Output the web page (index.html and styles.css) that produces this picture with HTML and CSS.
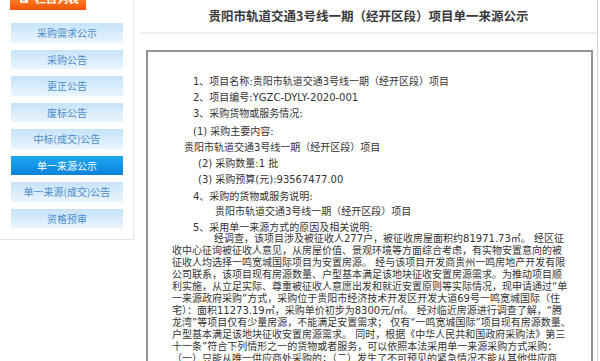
FILE: index.html
```html
<!DOCTYPE html>
<html>
	<head>
		<title>单一来源公示</title>
		<meta charset="utf-8" />
		<link rel="stylesheet" href="styles.css">
	</head>
	<body>
		<div id="page">
			<div id="side">
				<div class="side-head">
					<div class="side-head-in">
						<svg class="side-icon" width="10" height="12" viewBox="0 0 10 12"><rect x="1" y="1" width="8" height="10" rx="1" fill="#fff"/><path d="M3 4h4M3 6.5h4M3 9h3" stroke="#f26a2a" stroke-width="1"/></svg>
						<span>栏目列表</span>
					</div>
				</div>
				<div class="menu">
					<div class="menu-item">采购需求公示</div>
					<div class="menu-item">采购公告</div>
					<div class="menu-item">更正公告</div>
					<div class="menu-item">废标公告</div>
					<div class="menu-item">中标(成交)公告</div>
					<div class="menu-item active">单一来源公示</div>
					<div class="menu-item">单一来源(成交)公告</div>
					<div class="menu-item">资格预审</div>
				</div>
			</div>
			<div id="main">
				<div class="main-head">贵阳市轨道交通3号线一期（经开区段）项目单一来源公示</div>
				<div class="notice">
					<p class="item">1、项目名称:贵阳市轨道交通3号线一期（经开区段）项目</p>
					<p class="item">2、项目编号:YGZC-DYLY-2020-001</p>
					<p class="item">3、采购货物或服务情况:</p>
					<p class="item gap2">(1) 采购主要内容:</p>
					<p class="item sub1">贵阳市轨道交通3号线一期（经开区段）项目</p>
					<p class="item sub2">(2) 采购数量:1 批</p>
					<p class="item sub2">(3) 采购预算(元):93567477.00</p>
					<p class="item gap1">4、采购的货物或服务说明:</p>
					<p class="item sub3">贵阳市轨道交通3号线一期（经开区段）项目</p>
					<p class="item">5、采用单一来源方式的原因及相关说明:</p>
					<p class="para"><span class="indent">经调查，该项目涉及被征收人277户，被征收房屋面积约81971.73㎡。 经区征</span><br>收中心征询被征收人意见，从房屋价值、景观环境等方面综合考虑，有实物安置意向的被<br>征收人均选择一鸣宽城国际项目为安置房源。 经与该项目开发商贵州一鸣房地产开发有限<br>公司联系，该项目现有房源数量、户型基本满足该地块征收安置房源需求。为推动项目顺<br>利实施，从立足实际、尊重被征收人意愿出发和就近安置原则等实际情况，现申请通过“单<br>一来源政府采购”方式，采购位于贵阳市经济技术开发区开发大道69号一鸣宽城国际（住<br>宅）：面积11273.19㎡，采购单价初步为8300元/㎡。 经对临近房源进行调查了解，“腾<br>龙湾”等项目仅有少量房源，不能满足安置需求； 仅有“一鸣宽城国际”项目现有房源数量、<br>户型基本满足该地块征收安置房源需求。 同时，根据《中华人民共和国政府采购法》第三<br>十一条”符合下列情形之一的货物或者服务，可以依照本法采用单一来源采购方式采购：<br>（一）只能从唯一供应商处采购的；（二）发生了不可预见的紧急情况不能从其他供应商</p>
				</div>
			</div>
		</div>
	</body>
</html>
```

FILE: styles.css
```css
*{ box-sizing: border-box; }
body{ margin: 0; background: #fff; font-family: "DejaVu Sans", "Noto Sans CJK SC", sans-serif; color: #333; }
#page{ display: flex; align-items: flex-start; width: 600px; height: 361px; overflow: hidden; }

/* left column */
#side{
	width: 134px; padding-bottom: 11px;
	border-right: 1px solid #e6e6e6; border-bottom: 1px solid #e6e6e6;
}
.side-head{
	height: 10px; width: 76px; margin-left: 10px; overflow: hidden;
	background: linear-gradient(#ff7a1e, #f25204);
	display: flex; align-items: flex-end;
}
.side-head-in{
	height: 24px; flex-shrink: 0; display: flex; align-items: center; gap: 6px; padding-left: 9px;
	color: #fff; font-weight: bold; font-size: 11px; font-family: "Noto Sans CJK SC", sans-serif;
}
.menu{ display: flex; flex-direction: column; gap: 7px; padding: 13px 10px 0 11px; }
.menu-item{
	height: 19.5px; line-height: 19.5px; text-align: center;
	font-size: 10px; font-family: "Noto Sans CJK SC", sans-serif; color: #4c8ccb;
	background: linear-gradient(#c6e3f9, #eaf5fe);
}
.menu-item.active{ background: linear-gradient(#1ea8f2, #0a82d9); color: #fff; }

/* right column */
#main{ width: 458px; margin-left: 6px; height: 361px; border-right: 1px solid #d4d4d4; }
.main-head{
	height: 34px; line-height: 32px; text-align: center;
	border-bottom: 2px solid #efefef;
	font-family: "Noto Sans CJK SC", sans-serif; font-size: 12.5px; font-weight: bold; color: #3a3a3a;
}
.notice{
	margin: 16px 4px 0 6px; height: 320px;
	border: 2px solid #939393; border-bottom: none;
	padding: 22px 0 0 24px;
	font-size: 10px;
}
.item{ margin: 0 0 0 21px; line-height: 16px; white-space: nowrap; }
.item.gap2{ margin-top: 2px; }
.item.gap1{ margin-top: 1px; }
.item.sub1{ margin-left: 12px; }
.item.sub2{ margin-left: 26px; }
.item.sub3{ margin-left: 43px; margin-top: -1px; }
.para{ margin: -3px 0 0 0; line-height: 12px; white-space: nowrap; }
.indent{ padding-left: 42px; }
```
